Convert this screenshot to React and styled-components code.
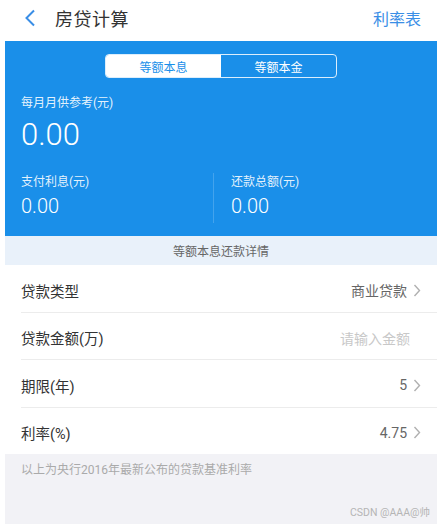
import React from 'react';
import styled, { createGlobalStyle } from 'styled-components';

const GlobalStyle = createGlobalStyle`
  html, body {
    margin: 0;
    padding: 0;
    background: #fff;
  }
  body {
    font-family: Roboto, "Noto Sans CJK SC", sans-serif;
    -webkit-font-smoothing: antialiased;
  }
`;

const Page = styled.div`
  width: 437px;
  height: 524px;
  padding-left: 5px;
  box-sizing: border-box;
  display: flex;
  flex-direction: column;
  overflow: hidden;
`;

const NavBar = styled.div`
  height: 41px;
  display: flex;
  align-items: center;
  padding: 0 16px 0 19px;
  flex-shrink: 0;
`;

const BackButton = styled.div`
  width: 12px;
  height: 18px;
  display: flex;
  align-items: center;
  margin-top: -6px;
`;

const Title = styled.div`
  margin-left: 19px;
  margin-top: -6px;
  font-size: 18px;
  color: #333;
  letter-spacing: 0.5px;
`;

const NavAction = styled.div`
  margin-left: auto;
  margin-top: -6px;
  font-size: 16px;
  color: #3a8ee6;
`;

const Banner = styled.div`
  background: #1a8fe9;
  padding: 13px 0 13px 16px;
  color: #fff;
  flex-shrink: 0;
`;

const Segmented = styled.div`
  width: 232px;
  height: 24px;
  margin: 0 auto;
  transform: translateX(-8px);
  display: flex;
  border: 1px solid rgba(255, 255, 255, 0.85);
  border-radius: 4px;
  overflow: hidden;
  box-sizing: border-box;
`;

const SegItem = styled.div`
  flex: 1;
  display: flex;
  align-items: center;
  justify-content: center;
  font-size: 12px;
  background: ${p => (p.active ? '#fff' : 'transparent')};
  color: ${p => (p.active ? '#1a8fe9' : '#fff')};
`;

const SmallLabel = styled.div`
  font-size: 12px;
  line-height: 16px;
  color: rgba(255, 255, 255, 0.9);
`;

const MainLabel = styled(SmallLabel)`
  margin-top: 17px;
`;

const MainValue = styled.div`
  margin-top: 6px;
  font-size: 31px;
  line-height: 36px;
  font-weight: 300;
`;

const StatsRow = styled.div`
  display: flex;
  margin-top: 20px;
`;

const Stat = styled.div`
  flex: ${p => (p.first ? '0 0 192px' : '1')};
  padding: 1px 0 5px ${p => (p.first ? '0' : '17px')};
  border-left: ${p => (p.first ? 'none' : '1px solid rgba(255, 255, 255, 0.18)')};
`;

const StatValue = styled.div`
  margin-top: 4px;
  font-size: 20px;
  line-height: 24px;
  font-weight: 300;
`;

const DetailStrip = styled.div`
  height: 29px;
  display: flex;
  align-items: center;
  justify-content: center;
  background: #e9f1fa;
  color: #666;
  font-size: 12px;
  flex-shrink: 0;
`;

const List = styled.div`
  background: #fff;
  padding-left: 16px;
  flex-shrink: 0;
`;

const Row = styled.div`
  height: 46.5px;
  display: flex;
  align-items: center;
  padding-right: 16px;
  border-bottom: ${p => (p.last ? 'none' : '1px solid #ececec')};
`;

const RowLabel = styled.div`
  font-size: 14.5px;
  color: #333;
  padding-top: 4px;
`;

const RowValue = styled.div`
  margin-left: auto;
  display: flex;
  align-items: center;
  gap: 6px;
  font-size: 14px;
  color: ${p => (p.placeholder ? '#c8c8c8' : '#666')};
  padding-top: 4px;
  margin-right: ${p => (p.placeholder ? '11px' : '0')};
`;

const Note = styled.div`
  flex: 1;
  background: #f2f2f6;
  padding: 8px 0 0 16px;
  display: flex;
  flex-direction: column;
`;

const NoteText = styled.div`
  font-size: 12px;
  line-height: 16px;
  color: #aaa;
`;

const Watermark = styled.div`
  margin-top: auto;
  margin-bottom: 5px;
  align-self: flex-end;
  margin-right: 7px;
  font-size: 10.5px;
  color: #b5b5b5;
`;

const Chevron = () => (
  <svg width="8" height="13" viewBox="0 0 8 13">
    <polyline points="1.5,1 6.5,6.5 1.5,12" fill="none" stroke="#b0b0b0" strokeWidth="1.4" />
  </svg>
);

const rows = [
  { label: '贷款类型', value: '商业贷款', arrow: true },
  { label: '贷款金额(万)', value: '请输入金额', placeholder: true },
  { label: '期限(年)', value: '5', arrow: true },
  { label: '利率(%)', value: '4.75', arrow: true },
];

export default function App() {
  return (
    <>
      <GlobalStyle />
      <Page>
        <NavBar>
          <BackButton>
            <svg width="12" height="18" viewBox="0 0 12 18">
              <polyline points="10,1.5 2.5,9 10,16.5" fill="none" stroke="#3a8ee6" strokeWidth="2" />
            </svg>
          </BackButton>
          <Title>房贷计算</Title>
          <NavAction>利率表</NavAction>
        </NavBar>

        <Banner>
          <Segmented>
            <SegItem active>等额本息</SegItem>
            <SegItem>等额本金</SegItem>
          </Segmented>
          <MainLabel>每月月供参考(元)</MainLabel>
          <MainValue>0.00</MainValue>
          <StatsRow>
            <Stat first>
              <SmallLabel>支付利息(元)</SmallLabel>
              <StatValue>0.00</StatValue>
            </Stat>
            <Stat>
              <SmallLabel>还款总额(元)</SmallLabel>
              <StatValue>0.00</StatValue>
            </Stat>
          </StatsRow>
        </Banner>

        <DetailStrip>等额本息还款详情</DetailStrip>

        <List>
          {rows.map((r, i) => (
            <Row key={r.label} last={i === rows.length - 1}>
              <RowLabel>{r.label}</RowLabel>
              <RowValue placeholder={r.placeholder}>
                {r.value}
                {r.arrow && <Chevron />}
              </RowValue>
            </Row>
          ))}
        </List>

        <Note>
          <NoteText>以上为央行2016年最新公布的贷款基准利率</NoteText>
          <Watermark>CSDN @AAA@帅</Watermark>
        </Note>
      </Page>
    </>
  );
}
